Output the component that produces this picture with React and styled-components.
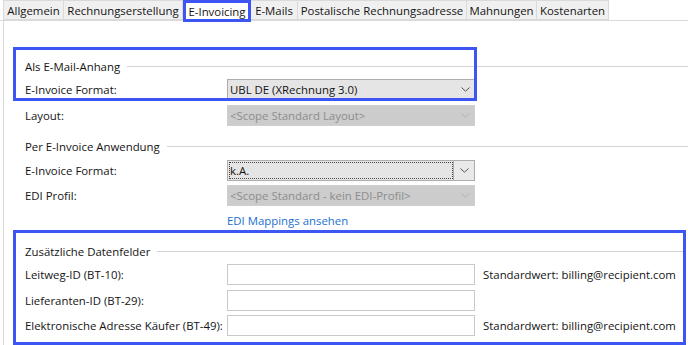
import React from 'react';
import styled, { createGlobalStyle } from 'styled-components';

const GlobalStyle = createGlobalStyle`
    html, body {
        margin: 0;
        padding: 0;
        background: #ffffff;
    }
    body {
        font-family: "Segoe UI", "Open Sans", "Noto Sans", sans-serif;
        font-size: 11.4px;
        color: #141414;
    }
`;

const Page = styled.div`
    width: 688px;
    height: 345px;
    overflow: hidden;
    background: #ffffff;
`;

const TabStrip = styled.div`
    display: flex;
    align-items: flex-end;
    height: 21px;
    padding: 1px 0 0 3px;
    box-sizing: border-box;
    border-bottom: 1px solid #dadada;
    background: #ffffff;
`;

const Tab = styled.div`
    height: ${props => props.active ? '22px' : '20px'};
    margin-bottom: ${props => props.active ? '-2px' : '0'};
    width: ${props => props.w}px;
    box-sizing: border-box;
    display: flex;
    align-items: center;
    justify-content: center;
    white-space: nowrap;
    background: ${props => props.active ? '#ffffff' : '#f0f0f0'};
    border: ${props => props.active ? '3px solid #3d55f2' : '1px solid #dadada'};
    border-left-width: ${props => props.active ? '3px' : '0'};
    position: relative;
    z-index: ${props => props.active ? 1 : 0};

    &:first-child {
        border-left-width: 1px;
    }
`;

const Panel = styled.div`
    position: relative;
    margin-left: 3px;
    border-left: 1px solid #dadada;
    height: 324px;
    padding: 36px 2px 0 9px;
    box-sizing: border-box;
`;

const Annotation = styled.div`
    position: absolute;
    left: 9px;
    top: 26px;
    width: 464px;
    height: 54px;
    box-sizing: border-box;
    border: 3px solid #3d55f2;
    pointer-events: none;
`;

const Group = styled.div`
    padding-left: 12px;
    margin-right: -2px;
    margin-bottom: ${props => props.mb || 0}px;
`;

const HighlightBox = styled.div`
    border: 3px solid #3d55f2;
    padding: 9px 0 6px 9px;
    margin-top: 1px;
`;

const GroupHeader = styled.div`
    display: flex;
    align-items: center;
    height: 18px;
    margin-bottom: 4px;
    white-space: nowrap;

    &::after {
        content: '';
        flex: 1;
        height: 1px;
        background: #d4d4d4;
        margin-left: 7px;
    }
`;

const Rows = styled.div`
    display: grid;
    grid-template-columns: 202px 248px auto;
    row-gap: 4.5px;
    align-items: center;
`;

const Label = styled.div`
    height: 21px;
    line-height: 21px;
    white-space: nowrap;
`;

const SelectBox = styled.div`
    height: 21px;
    box-sizing: border-box;
    display: flex;
    align-items: stretch;
    border: 1px solid ${props => props.disabled ? '#cfcfcf' : '#adadad'};
    background: ${props => props.disabled ? '#cccccc' : '#e5e5e5'};
    color: ${props => props.disabled ? '#8d8d8d' : '#141414'};
`;

const SelectText = styled.div`
    flex: 1;
    display: flex;
    align-items: center;
    padding-left: ${props => props.focused ? '0' : '2px'};
    margin: ${props => props.focused ? '1px 0 1px 1px' : '0'};
    border: ${props => props.focused ? '1px dotted #444' : 'none'};
    white-space: nowrap;
    overflow: hidden;
`;

const Chevron = styled.div`
    width: ${props => props.split ? '20px' : '18px'};
    display: flex;
    align-items: center;
    justify-content: center;
    border-left: ${props => props.split ? '1px solid #adadad' : 'none'};
    background: ${props => props.split ? '#e9e9e9' : 'transparent'};
`;

const TextInput = styled.div`
    height: 21px;
    box-sizing: border-box;
    border: 1px solid #c9c9c9;
    background: #ffffff;
`;

const Hint = styled.div`
    padding-left: 8px;
    white-space: nowrap;
`;

const LinkRow = styled.div`
    height: 16px;
    margin-top: 7px;
    padding-left: 202px;
    line-height: 16px;
    color: #1a6fcf;
    white-space: nowrap;
`;

const ChevronIcon = ({ color }) => (
    <svg width="9" height="5" viewBox="0 0 9 5">
        <path d="M0.5 0.5 L4.5 4.2 L8.5 0.5" fill="none" stroke={color} strokeWidth="1" />
    </svg>
);

const Select = ({ value, disabled, focused }) => (
    <SelectBox disabled={disabled}>
        <SelectText focused={focused}>{value}</SelectText>
        <Chevron split={focused}>
            <ChevronIcon color={disabled ? '#b3b3b3' : '#555555'} />
        </Chevron>
    </SelectBox>
);

const tabs = [
    { name: 'Allgemein', w: 61 },
    { name: 'Rechnungserstellung', w: 119 },
    { name: 'E-Invoicing', w: 68, active: true },
    { name: 'E-Mails', w: 47 },
    { name: 'Postalische Rechnungsadresse', w: 169 },
    { name: 'Mahnungen', w: 70 },
    { name: 'Kostenarten', w: 72 },
];

export default function App() {
    return (
        <Page>
            <GlobalStyle />
            <TabStrip>
                {tabs.map(t => (
                    <Tab key={t.name} w={t.w} active={t.active}>{t.name}</Tab>
                ))}
            </TabStrip>
            <Panel>
                <Group mb={12}>
                    <GroupHeader>Als E-Mail-Anhang</GroupHeader>
                    <Rows>
                        <Label>E-Invoice Format:</Label>
                        <Select value="UBL DE (XRechnung 3.0)" />
                        <span />
                        <Label>Layout:</Label>
                        <Select value="<Scope Standard Layout>" disabled />
                        <span />
                    </Rows>
                </Group>
                <Group>
                    <GroupHeader>Per E-Invoice Anwendung</GroupHeader>
                    <Rows>
                        <Label>E-Invoice Format:</Label>
                        <Select value="k.A." focused />
                        <span />
                        <Label>EDI Profil:</Label>
                        <Select value="<Scope Standard - kein EDI-Profil>" disabled />
                        <span />
                    </Rows>
                    <LinkRow>EDI Mappings ansehen</LinkRow>
                </Group>
                <HighlightBox>
                    <GroupHeader>Zusätzliche Datenfelder</GroupHeader>
                    <Rows>
                        <Label>Leitweg-ID (BT-10):</Label>
                        <TextInput />
                        <Hint>Standardwert: billing@recipient.com</Hint>
                        <Label>Lieferanten-ID (BT-29):</Label>
                        <TextInput />
                        <span />
                        <Label>Elektronische Adresse Käufer (BT-49):</Label>
                        <TextInput />
                        <Hint>Standardwert: billing@recipient.com</Hint>
                    </Rows>
                </HighlightBox>
                <Annotation />
            </Panel>
        </Page>
    );
}
